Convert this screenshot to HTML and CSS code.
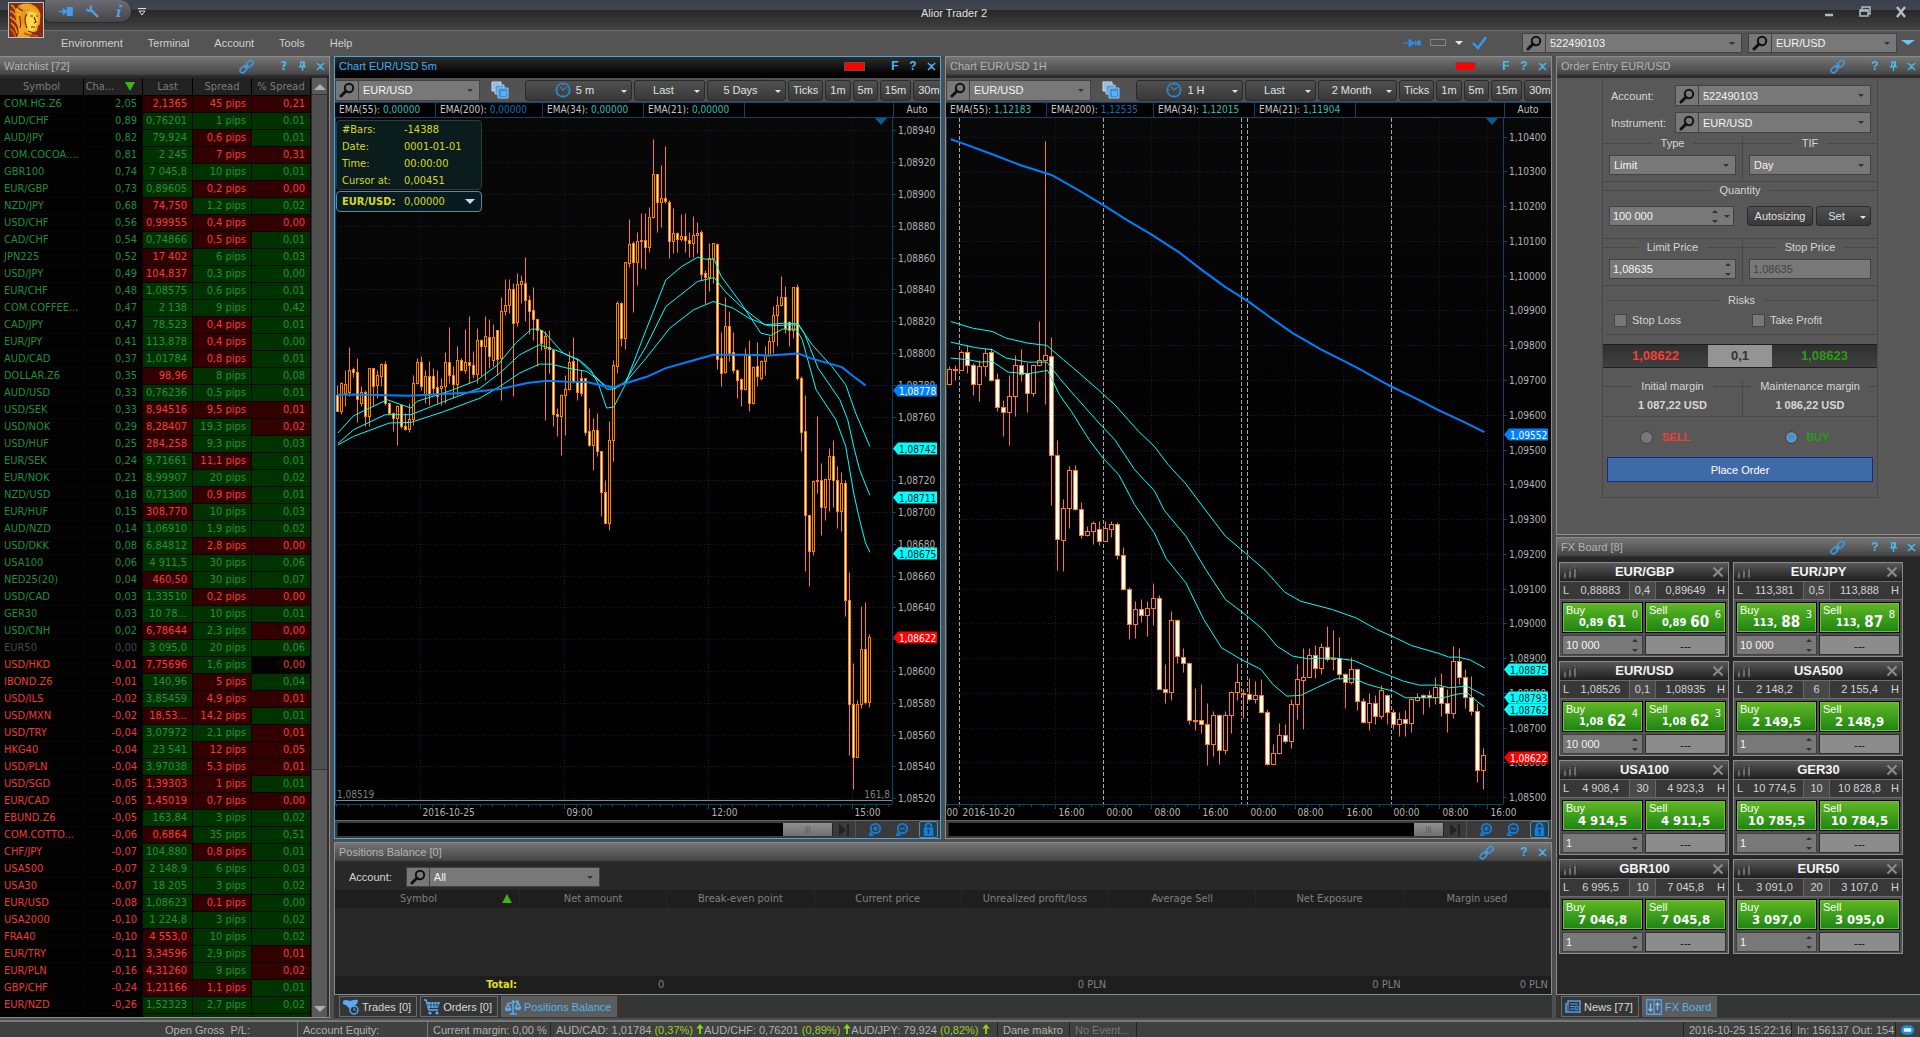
FILE: index.html
```html
<!DOCTYPE html>
<html lang="en">
<head>
<meta charset="utf-8">
<title>Alior Trader 2</title>
<link rel="stylesheet" href="styles.css">
</head>
<body>
<svg class="defs" aria-hidden="true">
  <symbol id="i-search" viewBox="0 0 16 16"><circle cx="10" cy="6" r="4.2" fill="none" stroke="#111" stroke-width="2"/><path d="M7 9 2 14" stroke="#111" stroke-width="3" stroke-linecap="round"/></symbol>
  <symbol id="i-link" viewBox="0 0 16 16"><g fill="none" stroke="#3f9be0" stroke-width="1.6"><rect x="7.5" y="2.5" width="8" height="5" rx="2.4" transform="rotate(-45 11.5 5)"/><rect x="0.8" y="8.6" width="8" height="5" rx="2.4" transform="rotate(-45 4.8 11.1)"/><path d="m6 10 4-4"/></g></symbol>
  <symbol id="i-pin" viewBox="0 0 10 12"><path d="M3 1h4v5H3zM6 1v5M1 6.5h8M5 7v4" fill="none" stroke="#4db8f0" stroke-width="1.4"/></symbol>
  <symbol id="i-close" viewBox="0 0 10 10"><path d="m1 1 2.500 2.500h3L9 1M1 9l2.500-2.500h3L9 9M3.500 3.500l3 3m0-3-3 3" fill="none" stroke="#4db8f0" stroke-width="1.500"/></symbol>
  <symbol id="i-copies" viewBox="0 0 18 18"><path d="M1 1h9v9H1z" fill="#9ab8d0" stroke="#cde"/><path d="M4 4h9v9H4z" fill="#5b9fd8" stroke="#a8d4f4"/><path d="M7 7h10v10H7z" fill="#3f8fdc" stroke="#8fc8f8"/><path d="M10 10h5v5h-5z" fill="#62aef0"/></symbol>
  <symbol id="i-clock" viewBox="0 0 16 16"><circle cx="8" cy="8" r="6.800" fill="none" stroke="#2f86cc" stroke-width="1.600"/><path d="M5 5l3 3 4-3M8 1v2.500M8 12.500V15M1 8h2.500M12.500 8H15" stroke="#2f86cc" stroke-width="1.200" fill="none"/></symbol>
  <symbol id="i-zoomin" viewBox="0 0 16 16"><circle cx="9" cy="7" r="5" fill="none" stroke="#0f7fe0" stroke-width="2"/><path d="M5.500 10.500 3 13M2 14h5M6.500 7h5M9 4.500v5" stroke="#0f7fe0" stroke-width="2"/></symbol>
  <symbol id="i-zoomout" viewBox="0 0 16 16"><circle cx="9" cy="7" r="5" fill="none" stroke="#0f7fe0" stroke-width="2"/><path d="M5.500 10.500 3 13M2 14h5M6.500 7h5" stroke="#0f7fe0" stroke-width="2"/></symbol>
  <symbol id="i-lock" viewBox="0 0 16 16"><path d="M5 7V4.500a3 3 0 0 1 6 0V7" fill="none" stroke="#0f7fe0" stroke-width="2"/><path d="M3 6h10v9H3z" fill="#0f7fe0"/><path d="M8 8v5M6.500 9h3" stroke="#103050" stroke-width="1.200"/></symbol>
  <symbol id="i-end" viewBox="0 0 12 14"><path d="M1 1v12l7-6zM9 1h2v12H9z" fill="#222"/></symbol>
  <symbol id="i-candles" viewBox="0 0 14 15"><g fill="#777" stroke="#333"><path d="M.5 8h3v5h-3zM5.500 5.500h3v7h-3zM10.500 3.500h3v9h-3z"/></g><path d="M2 6v8M7 3v11M12 1v13" stroke="#666" stroke-width=".8"/></symbol>
  <symbol id="i-cross" viewBox="0 0 12 12"><path d="m1.500 1.500 9 9m0-9-9 9" stroke="#8c8c8c" stroke-width="2"/></symbol>
  <symbol id="i-up" viewBox="0 0 8 12"><path d="M4 0 8 5H5v6H3V5H0z" fill="#8ad61c"/></symbol>
</svg>

<header class="titlebar">
  <svg class="logo" viewBox="0 0 36 36" role="img" aria-label="Alior logo">
    <rect width="36" height="36" fill="#8c2a10"/>
    <path d="M10 4c8-5 18-2 21 5 3 5 0 9 1 13l-2 2-1 5-5 2-2 4H9c3-5 1-9 0-14C7 14 6 8 10 4z" fill="#f0a81e"/>
    <path d="M20 10c4-1 8 0 9 3l1 7-2 3-1 5-6 2c-3-4-4-9-3-13z" fill="#ffd84a"/>
    <path d="M3 3c5 2 3 6 7 8M2 9c5 1 5 6 9 7M2 15c4 2 6 4 8 8M3 21c3 2 5 5 6 10M12 3c0 5 4 6 9 5M22 2c2 3 5 3 8 6M14 10c-1 4 1 8 0 12M17 8c-2 5 0 12-1 17" fill="none" stroke="#e8901c" stroke-width="1.600"/>
    <path d="M6 2c4 2 4 6 9 7M12 14c-1 4 2 7 0 12M22 14h3M28 14h2M26 15l2 5-2 1M23 25h4M20 29l6 2M19 12c-3 3-2 9 0 14" fill="none" stroke="#7a2408" stroke-width="1.200"/>
    <path d="M2 27c4 2 5 5 5 8M16 31c4 3 9 2 14 3" stroke="#c8501c" stroke-width="2" fill="none"/>
    <rect x=".5" y=".5" width="35" height="35" fill="none" stroke="#b8c4cc"/>
  </svg>
  <div class="quick">
    <button aria-label="Connect"><svg viewBox="0 0 16 12"><path d="M0 6h8M4 3 8 6 4 9M9 2h5v8H9z" fill="#3f9bee" stroke="#3f9bee" stroke-width="1.500"/></svg></button>
    <button aria-label="Settings"><svg viewBox="0 0 14 14"><path d="M5 5l8 8M1 4c0 2 3 3 4 1s0-4-1-4" fill="none" stroke="#4aa3f0" stroke-width="2.400"/></svg></button>
    <button aria-label="Information"><svg viewBox="0 0 10 14"><path d="M6 0h3L8.500 2.500h-3zM3 4.500h4.500L5.500 11.500H7L6.500 13H2.500L4.500 6H3z" fill="#4aa3f0"/></svg></button>
  </div>
  <button class="quick-more" aria-label="Customize"><svg viewBox="0 0 8 8"><path d="M0 .5h8M1 3h6L4 7z" fill="none" stroke="#ddd"/></svg></button>
  <h1>Alior Trader 2</h1>
  <div class="winbtns">
    <button aria-label="Minimize"><svg viewBox="0 0 14 14"><path d="M3 10h8" stroke="#b4bcc4" stroke-width="2.500"/></svg></button>
    <button aria-label="Restore"><svg viewBox="0 0 14 14"><path d="M4 4V2h8v7h-2M2 5h8v6H2zM2 6h8" fill="none" stroke="#b4bcc4" stroke-width="1.500"/></svg></button>
    <button aria-label="Close window"><svg viewBox="0 0 14 14"><path d="M3 2l8 10M11 2 3 12" stroke="#b4bcc4" stroke-width="2.500"/></svg></button>
  </div>
</header>

<div class="menubar">
  <nav><a href="#env">Environment</a><a href="#terminal">Terminal</a><a href="#account">Account</a><a href="#tools">Tools</a><a href="#help">Help</a></nav>
  <div class="menutools">
    <button aria-label="Link windows"><svg width="18" height="10" viewBox="0 0 18 10"><path d="M0 5h9M6 1l5 4-5 4zM12 3h1v4h-1zM14.500 3H18v4h-3.500z" fill="#2f8be0" stroke="#2f8be0"/></svg></button>
    <button class="swatch" aria-label="Link colour"></button>
    <i class="tri light"></i>
    <button aria-label="Apply"><svg width="16" height="14" viewBox="0 0 16 14"><path d="M1 7l5 5L14 1" fill="none" stroke="#2f9bf0" stroke-width="2.400"/></svg></button>
  </div>
  <div class="combo top-account"><button aria-label="Find account"><svg><use href="#i-search"/></svg></button><div class="drop"><select aria-label="Account"><option>522490103</option></select></div></div>
  <div class="combo top-symbol"><button aria-label="Find instrument"><svg><use href="#i-search"/></svg></button><div class="drop"><select aria-label="Instrument"><option>EUR/USD</option></select></div></div>
  <button class="more" aria-label="More"><i class="tri blue"></i></button>
</div>

<main class="workspace">
  <section class="panel watchlist">
    <header class="ptitle"><h2>Watchlist [72]</h2><button class="link" aria-label="Link"><svg><use href="#i-link"/></svg></button><button aria-label="Help">?</button><button aria-label="Pin"><svg><use href="#i-pin"/></svg></button><button aria-label="Close"><svg><use href="#i-close"/></svg></button></header>
    <div class="wl-body">
      <div class="wl-scroll">
        <table>
          <colgroup><col class="c-sym"><col class="c-chg"><col class="c-last"><col class="c-spr"><col class="c-pct"></colgroup>
          <thead><tr><th>Symbol</th><th class="sorted">Cha...<i class="sort down"></i></th><th>Last</th><th>Spread</th><th>% Spread</th></tr></thead>
          <tbody id="quotes"></tbody>
        </table>
      </div>
      <div class="vbar"><i class="arrow-up"></i><div class="vthumb"></div><i class="arrow-down"></i></div>
    </div>
  </section>

  <div class="center">
    <div class="charts">
      <section class="panel chart active" data-chart="m5">
        <header class="ptitle"><h2>Chart EUR/USD 5m</h2><i class="flag"></i><button aria-label="Float">F</button><button aria-label="Help">?</button><button aria-label="Close"><svg><use href="#i-close"/></svg></button></header>
        <div class="ctools">
          <div class="combo"><button aria-label="Find instrument"><svg><use href="#i-search"/></svg></button><div class="drop"><select aria-label="Chart instrument"><option>EUR/USD</option></select></div></div>
          <button class="copies" aria-label="Templates"><svg><use href="#i-copies"/></svg></button>
          <button class="btn tf"><svg><use href="#i-clock"/></svg>5 m<i class="tri light"></i></button>
          <button class="btn mode">Last<i class="tri light"></i></button>
          <button class="btn range">5 Days<i class="tri light"></i></button>
          <button class="btn">Ticks</button><button class="btn">1m</button><button class="btn">5m</button><button class="btn">15m</button><button class="btn">30m</button>
        </div>
        <div class="emas"><span>EMA(55): <b>0,00000</b></span><span>EMA(200): <b class="blue">0,00000</b></span><span>EMA(34): <b>0,00000</b></span><span>EMA(21): <b>0,00000</b></span><span class="auto">Auto</span></div>
        <div class="plot"><svg class="canvas"></svg>
          <div class="info">
            <dl><dt>#Bars:</dt><dd>-14388</dd><dt>Date:</dt><dd>0001-01-01</dd><dt>Time:</dt><dd>00:00:00</dd><dt>Cursor at:</dt><dd>0,00451</dd></dl>
            <div class="cur"><strong>EUR/USD:</strong><span>0,00000</span><i class="tri pale"></i></div>
          </div>
        </div>
        <div class="cbar"><div class="track"><div class="thumb">|||</div></div><button aria-label="Go to end"><svg class="end"><use href="#i-end"/></svg></button><div class="zooms"><button aria-label="Zoom in"><svg><use href="#i-zoomin"/></svg></button><button aria-label="Zoom out"><svg><use href="#i-zoomout"/></svg></button><button class="on" aria-label="Lock scale"><svg><use href="#i-lock"/></svg></button></div></div>
      </section>

      <section class="panel chart" data-chart="h1">
        <header class="ptitle"><h2>Chart EUR/USD 1H</h2><i class="flag"></i><button aria-label="Float">F</button><button aria-label="Help">?</button><button aria-label="Close"><svg><use href="#i-close"/></svg></button></header>
        <div class="ctools">
          <div class="combo"><button aria-label="Find instrument"><svg><use href="#i-search"/></svg></button><div class="drop"><select aria-label="Chart instrument"><option>EUR/USD</option></select></div></div>
          <button class="copies" aria-label="Templates"><svg><use href="#i-copies"/></svg></button>
          <button class="btn tf"><svg><use href="#i-clock"/></svg>1 H<i class="tri light"></i></button>
          <button class="btn mode">Last<i class="tri light"></i></button>
          <button class="btn range">2 Month<i class="tri light"></i></button>
          <button class="btn">Ticks</button><button class="btn">1m</button><button class="btn">5m</button><button class="btn">15m</button><button class="btn">30m</button>
        </div>
        <div class="emas"><span>EMA(55): <b>1,12183</b></span><span>EMA(200): <b class="blue">1,12535</b></span><span>EMA(34): <b>1,12015</b></span><span>EMA(21): <b>1,11904</b></span><span class="auto">Auto</span></div>
        <div class="plot"><svg class="canvas"></svg></div>
        <div class="cbar"><div class="track"><div class="thumb short">|||</div></div><button aria-label="Go to end"><svg class="end"><use href="#i-end"/></svg></button><div class="zooms"><button aria-label="Zoom in"><svg><use href="#i-zoomin"/></svg></button><button aria-label="Zoom out"><svg><use href="#i-zoomout"/></svg></button><button class="on" aria-label="Lock scale"><svg><use href="#i-lock"/></svg></button></div></div>
      </section>
    </div>

    <section class="panel positions">
      <header class="ptitle"><h2>Positions Balance [0]</h2><button class="link" aria-label="Link"><svg><use href="#i-link"/></svg></button><button aria-label="Help">?</button><button aria-label="Close"><svg><use href="#i-close"/></svg></button></header>
      <div class="pfilter"><label for="pos-acc">Account:</label><div class="combo"><button aria-label="Find account"><svg><use href="#i-search"/></svg></button><div class="drop"><select id="pos-acc"><option>All</option></select></div></div></div>
      <table>
        <colgroup><col class="p-sym"><col><col><col><col><col><col><col></colgroup>
        <thead><tr><th class="sorted">Symbol<i class="sort up"></i></th><th>Net amount</th><th>Break-even point</th><th>Current price</th><th>Unrealized profit/loss</th><th>Average Sell</th><th>Net Exposure</th><th>Margin used</th></tr></thead>
        <tbody><tr><td colspan="8"></td></tr></tbody>
        <tfoot><tr><td class="total">Total:</td><td>0</td><td></td><td></td><td>0 PLN</td><td></td><td>0 PLN</td><td>0 PLN</td></tr></tfoot>
      </table>
    </section>
    <div class="tabs">
      <button><svg viewBox="0 0 16 16"><path d="M0 2c3-2 6 0 7 0s4-2 8-1l-1 4-4 2H5L0 5z" fill="#5aabf4"/><path d="M3 6h7l-2 5z" fill="#5aabf4"/><circle cx="11" cy="11" r="4" fill="#333" stroke="#5aabf4" stroke-width="1.500"/><path d="M11 8.500V11h2" stroke="#5aabf4" fill="none"/></svg>Trades [0]</button>
      <button><svg viewBox="0 0 16 16"><path d="M0 1h2l3 10h9" fill="none" stroke="#5aabf4" stroke-width="1.500"/><path d="M3 3h13l-2 6H5z" fill="#5aabf4"/><path d="M3 6h12M7 3v6M10 3v6M13 3v6" stroke="#333" stroke-width=".7"/><circle cx="6" cy="14" r="1.600" fill="#5aabf4"/><circle cx="13" cy="14" r="1.600" fill="#5aabf4"/></svg>Orders [0]</button>
      <button class="on"><svg viewBox="0 0 16 16"><path d="M8 1v14M5 15h7M2 5l11-3M3 5 .5 10h5zM13 3l-2.500 6h5z" fill="none" stroke="#5aabf4" stroke-width="1.500"/><path d="M0 10h6l-1 2H1zM10 9h6l-1 2h-4z" fill="#5aabf4"/></svg>Positions Balance</button>
    </div>
  </div>

  <div class="right">
    <section class="panel order">
      <header class="ptitle"><h2>Order Entry EUR/USD</h2><button class="link" aria-label="Link"><svg><use href="#i-link"/></svg></button><button aria-label="Help">?</button><button aria-label="Pin"><svg><use href="#i-pin"/></svg></button><button aria-label="Close"><svg><use href="#i-close"/></svg></button></header>
      <form>
        <div class="line"><label for="o-acc">Account:</label><div class="combo"><button type="button" aria-label="Find account"><svg><use href="#i-search"/></svg></button><div class="drop"><select id="o-acc"><option>522490103</option></select></div></div></div>
        <div class="line"><label for="o-ins">Instrument:</label><div class="combo"><button type="button" aria-label="Find instrument"><svg><use href="#i-search"/></svg></button><div class="drop"><select id="o-ins"><option>EUR/USD</option></select></div></div></div>
        <div class="pair">
          <div><label class="cap" for="o-type">Type</label><div class="drop"><select id="o-type"><option>Limit</option></select></div></div>
          <div><label class="cap" for="o-tif">TIF</label><div class="drop"><select id="o-tif"><option>Day</option></select></div></div>
        </div>
        <div class="qty">
          <label class="cap" for="o-qty">Quantity</label>
          <div class="qrow"><div class="spin withdrop"><input id="o-qty" value="100 000"><i class="ud"></i><i class="tri dark"></i></div><button type="button" class="btn">Autosizing</button><button type="button" class="btn set">Set<i class="tri light"></i></button></div>
        </div>
        <div class="pair">
          <div><label class="cap" for="o-lim">Limit Price</label><div class="spin"><input id="o-lim" value="1,08635"><i class="ud"></i></div></div>
          <div><label class="cap" for="o-stop">Stop Price</label><div class="spin"><input id="o-stop" value="1,08635" disabled></div></div>
        </div>
        <fieldset class="risks"><legend class="cap">Risks</legend><div><label><input type="checkbox">Stop Loss</label><label><input type="checkbox">Take Profit</label></div></fieldset>
        <div class="strip"><b class="sell">1,08622</b><b class="mid">0,1</b><b class="buy">1,08623</b></div>
        <div class="pair margins"><div><span class="cap">Initial margin</span><strong>1 087,22 USD</strong></div><div><span class="cap">Maintenance margin</span><strong>1 086,22 USD</strong></div></div>
        <div class="side"><label class="sell"><input type="radio" name="side">SELL</label><label class="buy"><input type="radio" name="side" checked>BUY</label></div>
        <button type="button" class="place">Place Order</button>
      </form>
    </section>
    <section class="panel fx">
      <header class="ptitle"><h2>FX Board [8]</h2><button class="link" aria-label="Link"><svg><use href="#i-link"/></svg></button><button aria-label="Help">?</button><button aria-label="Pin"><svg><use href="#i-pin"/></svg></button><button aria-label="Close"><svg><use href="#i-close"/></svg></button></header>
      <div class="tiles" id="tiles"></div>
    </section>
    <div class="tabs">
      <button><svg viewBox="0 0 16 14"><path d="M3 1h12v11H1V4h2z" fill="none" stroke="#4f9ff0" stroke-width="1.500"/><path d="M5 4h8M5 6.500h4M5 9h4M10 6.500h3v3h-3zM3 4v7" stroke="#4f9ff0" fill="none"/></svg>News [77]</button>
      <button class="on"><svg viewBox="0 0 16 16"><path d="M.7.700h14.600v14.600H.7zM8 1v14" fill="none" stroke="#4f9ff0" stroke-width="1.400"/><path d="M4.500 4v8M2.500 10l2 2 2-2M11.500 11V4M9.500 6l2-2 2 2" fill="none" stroke="#7cc0ff" stroke-width="1.400"/></svg>FX Board</button>
    </div>
  </div>
</main>

<footer class="status">
  <span class="s-pl">Open Gross&nbsp; P/L:</span><span class="s-eq">Account Equity:</span><span class="s-mg">Current margin: 0,00 %</span>
  <span class="s-tk"><span>AUD/CAD: 1,01784 <b>(0,37%)</b><svg><use href="#i-up"/></svg></span><span>AUD/CHF: 0,76201 <b>(0,89%)</b><svg><use href="#i-up"/></svg></span><span>AUD/JPY: 79,924 <b>(0,82%)</b><svg><use href="#i-up"/></svg></span></span>
  <span class="s-mk">Dane makro</span><span class="s-ev">No Event...</span><span class="s-fill"></span>
  <span class="s-dt">2016-10-25 15:22:16</span><span class="s-io">In: 156137 Out: 154</span>
  <span class="s-ic"><svg viewBox="0 0 14 10"><rect x="0" y="0" width="14" height="10" rx="5" fill="#1c8fe0"/><rect x="3" y="3" width="8" height="4" rx="1" fill="#e8f6ff"/></svg></span>
</footer>
<script src="app.js"></script>
</body>
</html>
```
FILE: styles.css
```css
:root {
  --ui: "Liberation Sans", Arial, sans-serif;
  --data: "DejaVu Sans Condensed", "Noto Sans", sans-serif;
  --ctl: #787878;
  --edge: #424242;
}
* { box-sizing: border-box; }
html, body { margin: 0; height: 100%; }
body { display: flex; flex-direction: column; height: 100vh; overflow: hidden; background: #4e4e4e; color: #d4d4d4; font: 11px/14px var(--ui); }
.defs { position: absolute; width: 0; height: 0; }
h1, h2 { margin: 0; font-weight: normal; }
button, select, input { font: inherit; color: inherit; margin: 0; padding: 0; border: 0; background: none; }
button { display: inline-flex; align-items: center; justify-content: center; white-space: nowrap; }
a { color: inherit; text-decoration: none; }
table { border-collapse: separate; border-spacing: 0; table-layout: fixed; width: 100%; }
th { font-weight: normal; }

.tri { display: inline-block; width: 0; height: 0; border: 4px solid transparent; border-bottom: 0; border-top-color: #e4e4e4; }
.tri.dark { border-top-color: #333; }
.tri.blue { border-width: 5px 7px 0; border-top-color: #6cc4f8; }
.tri.pale { border-width: 5px 5px 0; border-top-color: #b8e0f8; }

/* title bar and menu */
.titlebar { position: relative; z-index: 1; display: flex; align-items: flex-start; height: 31px; padding: 0 12px 0 8px; background: linear-gradient(#3c404c 0, #40444f 10px, #272727 10px, #434343 30px); border-bottom: 1px solid #6c6c6c; }
.logo { width: 36px; height: 36px; margin-top: 2px; flex: none; }
.quick { display: flex; align-items: center; justify-content: space-around; width: 88px; height: 23px; padding-left: 8px; background: linear-gradient(#6a6a72, #464646); border: 1px solid #2c2c2c; border-top: 0; border-radius: 0 12px 12px 6px; }
.quick svg { width: 15px; height: 13px; }
.quick-more { margin: 8px 0 0 6px; }
.quick-more svg { width: 8px; height: 8px; }
.titlebar h1 { flex: 1; padding-right: 60px; margin: 6px 0 0; text-align: center; font-size: 11px; line-height: 14px; color: #e0e0e0; }
.winbtns { display: flex; gap: 22px; margin-top: 5px; }
.winbtns svg { width: 14px; height: 14px; }
.menubar { display: flex; align-items: center; height: 25px; padding: 0 1px 2px 0; background: #545454; flex: none; color: #cfcfcf; }
nav { display: flex; gap: 25px; margin-left: 61px; flex: 1; }
.menutools { display: flex; align-items: center; gap: 9px; margin-right: 34px; }
.swatch { width: 16px; height: 7px; border: 1px solid #858585; }
.more { width: 22px; }
.top-account { width: 220px; margin-right: 6px; }
.top-symbol { width: 149px; }

/* combo boxes and buttons */
.combo { display: flex; height: 20px; background: var(--ctl); border: 1px solid var(--edge); color: #f4f4f4; }
.combo > button { width: 23px; border-right: 1px solid var(--edge); flex: none; }
.combo svg { width: 16px; height: 16px; }
.combo .drop { flex: 1; border: 0; height: auto; }
.drop { position: relative; display: flex; height: 20px; background: var(--ctl); border: 1px solid var(--edge); color: #f4f4f4; }
.drop select { appearance: none; width: 100%; padding: 0 4px; }
.drop::after { content: ""; position: absolute; right: 6px; top: 8px; border: 3px solid transparent; border-bottom: 0; border-top-color: #333; pointer-events: none; }
.btn { height: 21px; padding: 0 4px; background: linear-gradient(#505050, #383838); border: 1px solid #2a2a2a; border-radius: 3px; color: #e0e0e0; }

/* docked panels */
.workspace { flex: 1; min-height: 0; display: flex; gap: 4px; padding-bottom: 2px; }
.panel { display: flex; flex-direction: column; border: 1px solid #8c8c8c; min-width: 0; }
.ptitle { display: flex; align-items: center; height: 21px; padding: 0 0 3px 4px; flex: none; background: linear-gradient(#757575, #474747 17px, #2a2a2a 19px); color: #b4b4b4; }
.ptitle h2 { flex: 1; font-size: 11px; line-height: 14px; white-space: nowrap; }
.ptitle button { width: 18px; color: #4db8f0; font-weight: bold; font-size: 12px; }
.ptitle svg { width: 9px; height: 11px; }
.ptitle .link { margin-right: 20px; }
.ptitle .link svg { width: 15px; height: 15px; }
.flag { width: 21px; height: 9px; background: #f00; border: 1px solid #555; margin-right: 21px; }

/* watchlist */
.watchlist { width: 330px; flex: none; border-left: 0; font-family: var(--data); background: #000; }
.watchlist .ptitle h2 { font-family: var(--ui); }
.wl-body { flex: 1; min-height: 0; display: flex; }
.wl-scroll { width: 311px; overflow: hidden; }
.c-sym { width: 84px; } .c-chg { width: 59px; } .c-last { width: 50px; } .c-spr { width: 59px; } .c-pct { width: 59px; }
.watchlist th, .watchlist td { height: 17px; padding: 0 5px 0 0; border: solid #000; border-width: 0 1px 1px 0; line-height: 14px; font-size: 11px; white-space: nowrap; overflow: hidden; text-align: right; }
.watchlist td { border-color: #060606; background: #020202; }
.watchlist th { height: 18px; padding: 0; text-align: center; background: #222; color: #7c7c7c; }
.watchlist th.sorted { padding-right: 26px; position: relative; }
.watchlist td:first-child { text-align: left; padding-left: 4px; }
.pos { color: #1f8f3f; } .neg { color: #ee3a34; } .zero { color: #484848; }
.watchlist td.g { background: #003200; color: #2a8f3c; }
.watchlist td.r { background: #320000; color: #f04038; }
.sort { position: absolute; right: 7px; top: 4px; border: 5px solid transparent; }
.sort.down { border-top: 9px solid #3cb414; border-bottom: 0; }
.sort.up { border-bottom: 9px solid #3cb414; border-top: 0; }
.vbar { flex: 1; display: flex; flex-direction: column; align-items: center; background: #5a5a5a; border-left: 1px solid #2a2a2a; border-right: 2px solid #2e2e2e; }
.arrow-up, .arrow-down { border: 6px solid transparent; margin: 6px 0 4px; flex: none; }
.arrow-up { border-bottom-color: #b0b0b0; border-top: 0; }
.arrow-down { border-top-color: #b0b0b0; border-bottom: 0; margin: auto 0 5px; }
.vthumb { width: 100%; height: 72%; background: #505050; border: solid #333; border-width: 1px 0; }

/* charts */
.center { flex: 1; min-width: 0; display: flex; flex-direction: column; }
.charts { flex: 1; min-height: 0; display: flex; gap: 4px; margin-bottom: 3px; }
.chart { flex: 1 1 0; background: #000; }
.chart.active { border-color: #3fa9e8; }
.chart.active .ptitle { background: linear-gradient(#2c2c2c, #000 18px); color: #3fb0f0; }
.ctools { display: flex; align-items: center; gap: 2px; height: 24px; flex: none; overflow: hidden; background: #525252; }
.ctools .combo { width: 145px; height: 21px; flex: none; }
.ctools .btn { flex: none; }
.copies { width: 41px; padding-left: 9px; justify-content: flex-start; flex: none; }
.copies svg { width: 18px; height: 18px; }
.ctools .tf { width: 107px; position: relative; gap: 5px; padding-right: 12px; }
.tf svg { width: 16px; height: 16px; }
.ctools .mode, .ctools .range { width: 71px; padding-right: 16px; position: relative; }
.ctools .range { width: 79px; }
.btn .tri { position: absolute; right: 4px; top: 9px; border-width: 3px 3px 0; }
.emas { display: flex; height: 16px; flex: none; border: solid #0a4468; border-width: 1px 0; font: 10px/14px var(--data); color: #c8c8c8; }
.emas span { width: 101px; padding-left: 4px; border-right: 1px solid #0a4468; white-space: nowrap; }
.emas span:nth-child(2) { width: 107px; }
.emas b { font-weight: normal; color: #2cc0b4; }
.emas b.blue { color: #0f70b8; }
.emas .auto { width: 47px; margin-left: auto; padding: 0; text-align: center; border-right: 0; border-left: 1px solid #0a4468; }
.plot { position: relative; flex: 1; min-height: 0; background: linear-gradient(#080808, #000 60%); }
.canvas { position: absolute; inset: 0; width: 100%; height: 100%; display: block; font: 10px var(--data); }
.info { position: absolute; left: 1px; top: 2px; width: 146px; font: 11px/17px var(--data); color: #d8d820; }
.info dl { display: grid; grid-template-columns: 62px 1fr; margin: 0 0 1px; padding: 0 0 0 5px; background: #0a1c1c; border: 1px solid #2c3c40; border-radius: 4px; }
.info dd { margin: 0; }
.cur { display: flex; align-items: center; height: 21px; padding: 0 6px 0 5px; background: #081c20; border: 1px solid #6484a8; border-radius: 4px; white-space: nowrap; }
.cur strong { width: 62px; }
.cur .tri { margin-left: auto; }
.cbar { display: flex; align-items: center; height: 18px; flex: none; padding: 0 2px; border-top: 1px solid #666; background: #3a3a3a; }
.track { flex: 1; height: 13px; display: flex; justify-content: flex-end; background: #000; border: solid #222; border-width: 0 1px; }
.thumb { width: 49px; text-align: center; font-size: 8px; line-height: 12px; color: #555; background: linear-gradient(#909090, #707070); }
.thumb.short { width: 29px; }
.cbar .end { width: 12px; height: 14px; margin: 0 5px; }
.zooms { display: flex; gap: 8px; border-left: 1px solid #555; padding-left: 9px; }
.zooms button { width: 19px; height: 17px; }
.zooms svg { width: 15px; height: 15px; }
.zooms .on { border: 1px solid #5c88a0; border-radius: 2px; background: #204050; }

/* positions */
.positions { height: 153px; flex: none; background: #282828; }
.pfilter { display: flex; align-items: center; gap: 14px; height: 26px; padding-left: 14px; }
.pfilter .combo { width: 194px; }
.p-sym { width: 185px; }
.positions table { flex: 1; font: 11px/16px var(--data); color: #808080; }
.positions th { height: 18px; padding: 0; background: #1e1e1e; border-right: 1px solid #262626; }
.positions th.sorted { position: relative; padding-right: 17px; }
.positions tfoot td { height: 18px; padding: 0 3px 0 0; text-align: right; background: #1e1e1e; }
.positions td.total { color: #e0e020; font-weight: bold; }
.positions .sort { top: 4px; right: 7px; }
.tabs { display: flex; gap: 3px; align-items: flex-start; height: 23px; padding: 1px 0 0 5px; flex: none; background: #343636; }
.tabs button { height: 21px; gap: 3px; padding: 0 5px 0 3px; border: 1px solid #6a6a6a; color: #d8d8d8; }
.tabs svg { width: 16px; height: 16px; }
.tabs .on { background: #5c5c5c; color: #4db8f0; border-color: #606060; }

/* order entry */
.right { width: 364px; flex: none; display: flex; flex-direction: column; }
.order { height: 479px; flex: none; margin-bottom: 2px; background: #585858; border-right: 0; }
form { width: 276px; height: 420px; margin-left: 45px; border: 1px solid #484848; border-top: 0; display: flex; flex-direction: column; color: #d6d6d6; }
.line { display: flex; align-items: center; justify-content: space-between; height: 27px; padding: 0 6px 0 8px; margin-top: 4px; }
.line + .line { margin-top: 0; }
.line .combo { width: 196px; height: 21px; }
.pair { display: grid; grid-template-columns: 139px 1fr; height: 46px; border-bottom: 1px solid #484848; }
.pair > div { padding: 0 6px; display: flex; flex-direction: column; gap: 4px; border-left: 1px solid #484848; }
.pair > div:first-child { border-left: 0; }
.cap { display: flex; align-items: center; gap: 9px; height: 15px; line-height: 15px; margin: 0 -6px; white-space: nowrap; }
.cap::before, .cap::after { content: ""; flex: 1; height: 1px; background: #484848; }
.qty { height: 57px; padding: 1px 6px 0; border-bottom: 1px solid #484848; margin-bottom: 1px; }
.qrow { display: flex; gap: 3px; margin-top: 8px; }
.qrow .spin { width: 125px; margin-right: 10px; }
.qrow .btn { flex: 1; height: 20px; padding: 0; }
.qrow .set { flex: none; width: 55px; padding-right: 14px; position: relative; }
.spin { display: flex; align-items: center; height: 20px; background: var(--ctl); border: 1px solid var(--edge); color: #f4f4f4; }
.spin input { flex: 1; min-width: 0; width: 0; padding: 0 3px; height: 100%; }
.spin input:disabled { color: #444; }
.ud { width: 6px; height: 13px; margin-right: 4px; display: flex; flex-direction: column; justify-content: space-between; flex: none; }
.ud::before, .ud::after { content: ""; border: 3px solid transparent; }
.ud::before { border-bottom-color: #333; border-top: 0; }
.ud::after { border-top-color: #333; border-bottom: 0; }
.withdrop .tri { border-width: 3px 3px 0; margin: 0 3px; }
.withdrop .ud { margin-right: 3px; }
.withdrop .ud + .tri { box-sizing: content-box; }
.risks { margin: 7px 0 9px 3px; padding: 0; border: 0; border-bottom: 1px solid #484848; height: 42px; }
.risks legend { width: 100%; padding: 0; margin: 0; }
.risks > div { display: grid; grid-template-columns: 138px 1fr; padding: 5px 0 0 8px; }
.risks label, .side label { display: flex; align-items: center; gap: 5px; }
input[type=checkbox] { appearance: none; width: 13px; height: 13px; background: var(--ctl); border: 1px solid #444; }
input[type=radio] { appearance: none; width: 13px; height: 13px; border-radius: 50%; background: var(--ctl); border: 1px solid #444; }
input[type=radio]:checked { background: radial-gradient(circle, #2a98e8 0 3px, #8a9aa4 4px, #787878 5px); }
.strip { display: flex; height: 24px; line-height: 22px; text-align: center; font-size: 13px; border: solid #1e1e1e; border-width: 1px 0; background: linear-gradient(#303030, #404040); flex: none; }
.strip b { flex: 1; }
.strip .mid { flex: none; width: 64px; background: #949494; color: #333; }
.sell { color: #f04038; }
.buy { color: #2c9a18; }
.margins { margin-top: 11px; height: 38px; }
.margins strong { text-align: center; }
.side { display: flex; height: 40px; align-items: center; font-weight: bold; }
.side label { gap: 9px; margin-left: 37px; }
.side .buy { gap: 8px; margin-left: 95px; }
.place { height: 25px; margin: 0 4px; background: #3f6aa8; border: 1px solid #0a2f88; color: #fff; }

/* fx board */
.fx { flex: 1; min-height: 0; background: #272727; border-right: 0; }
.tiles { display: grid; grid-template-columns: 170px 170px; gap: 4px; padding: 3px 2px; }
.tile { height: 95px; border: 1px solid #8c8c8c; background: #505050; }
.tile header { display: flex; align-items: center; height: 19px; padding: 0 4px 0 3px; background: linear-gradient(#585858, #1e1e1e); border-bottom: 1px solid #6c6c6c; }
.tile h3 { flex: 1; margin: 0; text-align: center; font-size: 13px; line-height: 16px; color: #f4f4f4; }
.tile header svg { width: 14px; height: 15px; }
.tile header button svg { width: 12px; height: 12px; }
.lh { display: grid; grid-template-columns: 12px 57px 27px 59px 12px; height: 18px; line-height: 17px; text-align: center; background: #383838; border-bottom: 1px solid #6c6c6c; }
.lh span:nth-child(3) { background: #484848; border: solid #666; border-width: 0 1px; }
.cells { display: grid; grid-template-columns: 81px 81px; grid-template-rows: 31px 20px; gap: 2px; padding: 2px; }
.deal { position: relative; align-items: flex-end; gap: 4px; padding-bottom: 1px; background: linear-gradient(#62b824, #1c8414); border: 1px solid #000; box-shadow: inset 0 0 0 1px #70c030; color: #fff; font: bold 13px/16px var(--data); }
.deal small { position: absolute; left: 3px; top: 1px; font: 11px/13px var(--ui); }
.deal .sm { font-size: 11px; }
.deal .lg { font-size: 15px; line-height: 18px; }
.deal sup { position: absolute; right: 4px; top: 5px; font: 11px/14px var(--data); }
.deal.frac { padding-right: 0; }
.cells .none { background: #8c8c8c; border: 1px solid #2c2c2c; color: #111; text-align: center; line-height: 20px; }

/* status bar */
.status { display: flex; height: 17px; flex: none; overflow: hidden; padding-left: 2px; background: #404040; border-top: 2px solid #787878; color: #b0b0b0; line-height: 16px; white-space: nowrap; }
.status > span { padding-left: 5px; border-right: 1px solid #222; }
.status b { font-weight: normal; color: #98d028; margin: 0 3px 0 0; }
.status svg { width: 8px; height: 11px; vertical-align: -1px; }
.status .s-pl { width: 296px; padding-left: 163px; border-color: #777; }
.status .s-eq { width: 130px; border-color: #777; }
.s-mg { width: 123px; }
.s-tk { display: flex; justify-content: space-between; width: 447px; padding-right: 8px; }
.s-mk { width: 72px; }
.s-ev { width: 67px; color: #787878; }
.s-fill { flex: 1; }
.s-dt { width: 108px; }
.s-io { width: 104px; }
.status .s-ic { width: 24px; border: 0; }
.s-ic svg { width: 13px; height: 10px; }
```
FILE: app.js
```js
// Watchlist rows: symbol | change | last | spread | % spread; a leading r, g or k sets the cell colour.
const quotes = `COM.HG.Z6|2,05|r2,1365|r45|r0,21
AUD/CHF|0,89|g0,76201|g1|g0,01
AUD/JPY|0,82|g79,924|r0,6|g0,01
COM.COCOA....|0,81|g2 245|r7|r0,31
GBR100|0,74|g7 045,8|g10|g0,01
EUR/GBP|0,73|g0,89605|r0,2|r0,00
NZD/JPY|0,68|r74,750|g1,2|g0,02
USD/CHF|0,56|r0,99955|r0,4|r0,00
CAD/CHF|0,54|g0,74866|r0,5|g0,01
JPN225|0,52|r17 402|g6|g0,03
USD/JPY|0,49|r104,837|g0,3|g0,00
EUR/CHF|0,48|g1,08575|g0,6|g0,01
COM.COFFEE...|0,47|g2 138|g9|g0,42
CAD/JPY|0,47|g78,523|r0,4|g0,01
EUR/JPY|0,41|g113,878|r0,4|g0,00
AUD/CAD|0,37|g1,01784|r0,8|g0,01
DOLLAR.Z6|0,35|r98,96|g8|g0,08
AUD/USD|0,33|g0,76236|g0,5|g0,01
USD/SEK|0,33|r8,94516|r9,5|r0,01
USD/NOK|0,29|r8,28407|g19,3|r0,02
USD/HUF|0,25|r284,258|g9,3|g0,03
EUR/SEK|0,24|g9,71661|r11,1|g0,01
EUR/NOK|0,21|g8,99907|g20|g0,02
NZD/USD|0,18|g0,71300|r0,9|g0,01
EUR/HUF|0,15|r308,770|g10|g0,03
AUD/NZD|0,14|g1,06910|g1,9|g0,02
USD/DKK|0,08|g6,84812|r2,8|r0,00
USA100|0,06|g4 911,5|g30|g0,06
NED25(20)|0,04|r460,50|g30|g0,07
USD/CAD|0,03|g1,33510|r0,2|r0,00
GER30|0,03|g10 78...|g10|g0,01
USD/CNH|0,02|r6,78644|g2,3|r0,00
EUR50|0,00|g3 095,0|g20|g0,06
USD/HKD|-0,01|r7,75696|g1,6|k0,00
IBOND.Z6|-0,01|g140,96|r5|g0,04
USD/ILS|-0,02|g3,85459|r4,9|r0,01
USD/MXN|-0,02|r18,53...|r14,2|g0,01
USD/TRY|-0,04|g3,07972|g2,1|r0,01
HKG40|-0,04|g23 541|r12|r0,05
USD/PLN|-0,04|g3,97038|r5,3|r0,01
USD/SGD|-0,05|r1,39303|r1|g0,01
EUR/CAD|-0,05|r1,45019|r0,7|r0,00
EBUND.Z6|-0,05|g163,84|g3|g0,02
COM.COTTO...|-0,06|r0,6864|g35|g0,51
CHF/JPY|-0,07|g104,880|r0,8|g0,01
USA500|-0,07|g2 148,9|g6|g0,03
USA30|-0,07|g18 205|g3|g0,02
EUR/USD|-0,08|g1,08623|r0,1|g0,00
USA2000|-0,10|g1 224,8|g3|g0,02
FRA40|-0,10|r4 553,0|g10|g0,02
EUR/TRY|-0,11|r3,34596|g2,9|r0,01
EUR/PLN|-0,16|r4,31260|g9|r0,02
GBP/CHF|-0,24|r1,21166|r1,1|g0,01
EUR/NZD|-0,26|g1,52323|g2,7|g0,02
AUS200|-0,30|g5 437|g5|g0,09`;
document.getElementById('quotes').innerHTML = quotes.split('\n').map(line => {
  const [sym, chg, last, spr, pct] = line.split('|');
  const dir = chg === '0,00' ? 'zero' : chg[0] === '-' ? 'neg' : 'pos';
  const cell = (v, unit = '') => `<td class="${v[0] === 'k' ? 'neg' : v[0]}">${v.slice(1)}${unit}</td>`;
  return `<tr><td class="${dir}">${sym}</td><td class="${dir}">${chg}</td>${cell(last)}${cell(spr, ' pips')}${cell(pct)}</tr>`;
}).join('');

// FX tiles: name, low, spread, high, buy, sell, amount; split prices are "small large pip".
const tiles = [
  ['EUR/GBP', '0,88883', '0,4', '0,89649', ['0,89', '61', '0'], ['0,89', '60', '6'], '10 000'],
  ['EUR/JPY', '113,381', '0,5', '113,888', ['113,', '88', '3'], ['113,', '87', '8'], '10 000'],
  ['EUR/USD', '1,08526', '0,1', '1,08935', ['1,08', '62', '4'], ['1,08', '62', '3'], '10 000'],
  ['USA500', '2 148,2', '6', '2 155,4', ['2 149,5'], ['2 148,9'], '1'],
  ['USA100', '4 908,4', '30', '4 923,3', ['4 914,5'], ['4 911,5'], '1'],
  ['GER30', '10 774,5', '10', '10 828,8', ['10 785,5'], ['10 784,5'], '1'],
  ['GBR100', '6 995,5', '10', '7 045,8', ['7 046,8'], ['7 045,8'], '1'],
  ['EUR50', '3 091,0', '20', '3 107,0', ['3 097,0'], ['3 095,0'], '1']
];
const deal = (label, p) => `<button class="deal${p[2] ? ' frac' : ''}"><small>${label}</small>` +
  (p[2] ? `<span class="sm">${p[0]}</span><span class="lg">${p[1]}</span><sup>${p[2]}</sup>` : `<span>${p[0]}</span>`) + '</button>';
document.getElementById('tiles').innerHTML = tiles.map(([n, lo, sp, hi, b, s, q]) => `
  <article class="tile"><header><svg><use href="#i-candles"/></svg><h3>${n}</h3><button aria-label="Remove ${n}"><svg><use href="#i-cross"/></svg></button></header>
  <div class="lh"><span>L</span><span>${lo}</span><span>${sp}</span><span>${hi}</span><span>H</span></div>
  <div class="cells">${deal('Buy', b)}${deal('Sell', s)}<div class="spin"><input aria-label="${n} amount" value="${q}"><i class="ud"></i></div><div class="none">---</div></div></article>`).join('');

// Candle: high, body top, body bottom, low, direction (1 = falling), in chart units down from the top.
const m5 = [
1005,1035,1085,1085,1, 998,1000,1085,1092,0, 960,1002,1030,1068,0, 893,960,1028,1040,0, 953,957,968,982,1, 925,967,1047,1118,1, 1010,1027,1060,1070,0,
1022,1027,1100,1130,1, 955,955,1100,1128,0, 955,955,1008,1070,1, 960,977,1007,1045,0, 940,943,980,1010,0, 935,943,1060,1065,1, 1058,1060,1090,1092,1,
1086,1090,1105,1145,1, 1066,1068,1105,1187,0, 1064,1066,1130,1134,1, 1090,1128,1138,1140,1, 1060,1108,1138,1148,0, 975,1000,1108,1125,0, 925,937,1000,1004,0,
918,937,1010,1020,1, 960,980,1035,1060,0, 935,978,1035,1065,1, 955,978,1015,1035,1, 960,1013,1040,1060,1, 985,1008,1015,1065,0, 907,937,1010,1060,0,
832,937,977,1000,1, 950,975,1003,1045,1, 890,932,1003,1035,0, 925,930,960,962,1, 838,937,962,970,0, 798,937,945,1000,1, 905,945,972,985,1,
835,870,972,1000,0, 868,872,890,978,1, 798,860,890,990,0, 808,862,920,955,1, 822,862,930,950,0, 840,842,927,975,1, 742,785,925,1052,0,
687,765,785,795,0, 687,717,767,790,0, 700,717,820,1038,1, 670,703,818,830,0, 675,693,703,760,0, 622,700,752,815,1, 735,752,783,853,1,
712,782,808,870,1, 808,808,840,950,1, 842,842,880,900,1, 845,860,895,1110,0, 840,893,898,970,1, 898,900,1093,1128,1, 1075,1092,1100,1158,1,
1033,1035,1100,1215,0, 975,1018,1037,1157,0, 905,937,1018,1020,0, 862,935,993,1000,1, 925,993,1028,1050,1, 960,985,1030,1040,1, 985,985,1148,1155,1,
1075,1143,1187,1190,1, 1105,1140,1187,1262,0, 1090,1142,1205,1220,1, 1205,1205,1328,1400,1, 1290,1328,1420,1420,1, 1115,1170,1420,1440,0, 930,945,1170,1235,0,
755,760,948,970,0, 757,760,865,890,1, 635,637,865,897,0, 507,582,640,650,0, 573,580,637,787,1, 545,573,637,705,0, 490,570,574,655,1,
490,570,590,657,1, 470,500,590,605,0, 267,373,502,505,0, 372,373,457,545,1, 345,443,457,530,0, 288,445,453,458,1, 450,455,573,625,1,
475,548,573,608,0, 545,548,567,607,1, 492,558,567,573,0, 488,558,570,605,1, 545,570,580,620,1, 497,555,580,620,0, 515,548,555,608,0,
540,545,672,690,1, 660,670,680,763,1, 580,625,680,723,0, 578,580,625,700,0, 578,582,928,958,1, 848,925,970,1010,1, 742,830,968,970,0,
783,830,910,935,1, 848,907,962,970,1, 958,960,990,1045,1, 985,988,1018,1068,1, 895,915,1018,1020,0, 870,915,1060,1085,1, 950,952,1060,1062,0,
878,950,980,1010,1, 930,935,985,990,0, 890,915,935,975,0, 860,875,915,918,0, 770,795,875,910,0, 740,765,795,890,0, 678,742,765,768,0,
708,742,835,850,1, 815,818,840,890,1, 710,712,840,865,0, 703,712,985,990,1, 980,985,1147,1205,1, 1035,1145,1397,1563,1, 1395,1395,1505,1610,1,
1290,1295,1505,1515,0, 1098,1290,1295,1330,1, 1240,1290,1372,1455,1, 1285,1287,1372,1410,0, 1195,1218,1287,1385,0, 1170,1218,1292,1372,1, 1250,1292,1385,1435,1,
1267,1300,1385,1443,0, 1290,1300,1650,1698,1, 1568,1650,1963,2117,1, 1842,1963,2123,2220,1, 1952,1963,2123,2124,0, 1670,1800,1963,1977,0, 1657,1800,1957,1965,1, 1755,1762,1957,1973,0];
const h1 = [
950,957,1002,1005,0, 945,958,962,990,1, 900,907,960,962,0, 887,907,947,970,1, 940,945,1003,1035,1, 930,948,1002,1055,0, 895,910,948,980,0,
895,908,990,995,1, 970,988,1073,1083,1, 1050,1072,1088,1160,1, 975,1040,1088,1185,0, 917,945,1040,1100,0, 897,945,972,995,1, 940,970,1030,1088,1,
942,945,1030,1040,0, 813,932,947,950,0, 272,917,932,1062,0, 862,918,1216,1365,1, 1170,1216,1467,1562,1, 1347,1376,1470,1563,0, 1250,1260,1376,1435,0,
1245,1260,1378,1380,1, 1358,1378,1455,1465,1, 1428,1443,1455,1460,0, 1415,1420,1445,1483,0, 1415,1437,1475,1485,1, 1415,1435,1473,1475,0, 1415,1423,1438,1462,0,
1416,1423,1517,1527,1, 1492,1517,1618,1622,1, 1612,1618,1723,1770,1, 1655,1678,1723,1765,0, 1648,1678,1697,1717,1, 1655,1675,1697,1760,0, 1600,1645,1675,1727,0,
1635,1645,1918,1920,1, 1845,1918,1928,1960,1, 1685,1710,1928,1953,0, 1708,1710,1820,1840,1, 1795,1822,1840,1868,1, 1838,1840,2013,2025,1, 1915,2011,2015,2043,1,
1905,2011,2023,2050,1, 1960,2023,2085,2148,1, 1985,1997,2083,2120,0, 1995,1997,2103,2145,1, 1985,1998,2103,2115,0, 1925,1927,1998,2052,0, 1842,1897,1928,1953,0,
1918,1930,1934,2005,1, 1887,1933,1948,1953,1, 1895,1936,1950,1960,0, 1890,1937,1988,1992,1, 1978,1988,2143,2148,1, 2085,2110,2143,2144,0, 2022,2058,2112,2115,0,
2025,2058,2075,2080,1, 1950,1963,2075,2097,0, 1845,1890,1963,2008,0, 1797,1882,1892,2040,0, 1797,1818,1882,1884,0, 1787,1818,1855,1885,1, 1780,1792,1855,1873,0,
1728,1792,1830,1835,1, 1740,1826,1830,1863,1, 1762,1827,1873,1888,1, 1870,1873,1897,1977,1, 1822,1860,1897,1903,0, 1855,1860,1955,1982,1, 1945,1955,2018,2020,1,
1930,1960,2018,2043,0, 1938,1960,2000,2025,1, 1908,1922,2000,2010,0, 1935,1937,1988,2025,1, 1980,1987,2023,2040,1, 1987,2010,2023,2060,0, 1983,2010,2020,2060,1,
1945,1950,2022,2047,0, 1930,1943,1952,1955,0, 1935,1938,1942,1995,1, 1922,1938,1942,1973,1, 1883,1912,1942,1965,0, 1870,1912,1960,2000,1, 1920,1960,1992,2048,1,
1790,1835,1992,2005,0, 1797,1835,1883,1903,1, 1860,1883,1943,1975,1, 1880,1942,1985,1997,1, 1960,1985,2162,2197,1, 2095,2117,2162,2220,0];

const charts = {
  m5: {
    candles: m5, first: 18, step: 10.12, body: 3,
    prices: { top: 108940, by: 20, n: 22, y: 241, dy: 95.5 },
    grid: [228, 593, 957, 1321], days: [],
    times: [[234, '2016-10-25'], [598, '09:00'], [963, '12:00'], [1327, '15:00']],
    slow: '20,1035 60,1034 200,1038 300,1032 350,1028 430,1018 500,1000 550,993 600,996 650,997 690,1008 720,1012 750,1000 800,982 850,955 900,938 970,915 1050,915 1110,917 1185,911 1215,925 1260,940 1295,952 1325,980 1355,1007',
    fast: ['20,1150 60,1098 145,1050 205,1075 220,1055 300,1025 370,993 425,945 470,880 510,838 530,838 545,850 590,910 630,930 660,960 680,1005 700,1075 718,1072 745,1010 800,840 850,690 890,650 930,622 950,628 972,628 990,680 1040,760 1090,850 1115,857 1145,838 1180,838 1195,870 1230,1020 1280,1110 1305,1190 1325,1330 1340,1410 1355,1480 1366,1508',
      '20,1182 60,1140 140,1095 205,1095 300,1050 380,1015 430,970 480,915 530,885 580,905 630,932 680,990 700,1018 720,1018 745,1000 800,890 850,770 930,695 972,683 1000,725 1040,770 1100,825 1150,820 1185,822 1200,850 1235,955 1290,1050 1310,1110 1325,1190 1340,1260 1366,1337',
      '20,1186 60,1160 150,1120 205,1118 290,1085 380,1045 430,1010 480,970 530,943 560,943 600,955 650,965 700,1010 720,1014 750,995 800,925 860,835 920,780 970,755 1020,775 1060,805 1110,828 1185,825 1220,885 1270,950 1305,1005 1330,1090 1366,1190'],
    tags: [[1021, '1,08778', '#0080ff', '#fff'], [1194, '1,08742', '#0ff', '#022'], [1341, '1,08711', '#0ff', '#022'], [1510, '1,08675', '#0ff', '#022'], [1764, '1,08622', '#f00', '#fff']],
    level: [2251, '1,08519', '161,8']
  },
  h1: {
    candles: h1, first: 21, step: 15.18, body: 5,
    prices: { top: 110400, by: 100, n: 20, y: 260, dy: 104.4 },
    grid: [289, 532, 653, 896, 1018, 1260, 1382], days: [47, 411, 760, 775, 1139],
    times: [[14, '00'], [53, '2016-10-20'], [296, '16:00'], [417, '00:00'], [538, '08:00'], [660, '16:00'], [781, '00:00'], [902, '08:00'], [1025, '16:00'], [1145, '00:00'], [1267, '08:00'], [1389, '16:00']],
    slow: '25,268 50,278 130,313 200,345 280,375 340,415 410,465 470,510 530,552 600,605 660,660 720,712 780,757 830,800 890,850 960,898 1050,952 1130,1005 1200,1045 1260,1082 1320,1115 1375,1147',
    fast: ['25,815 80,835 130,845 165,865 220,880 268,887 310,930 350,970 400,1022 440,1065 500,1145 540,1190 575,1245 620,1303 660,1367 720,1460 770,1510 820,1562 870,1628 910,1655 990,1680 1050,1705 1100,1738 1150,1765 1190,1788 1260,1812 1285,1823 1310,1823 1340,1832 1375,1855',
      '25,877 85,893 130,900 165,925 220,937 268,937 300,985 340,1040 400,1120 440,1170 490,1260 540,1323 565,1382 620,1460 670,1560 720,1650 770,1695 815,1740 850,1790 890,1820 930,1828 990,1825 1045,1833 1100,1862 1170,1895 1210,1907 1260,1907 1285,1915 1330,1910 1375,1938',
      '25,925 70,930 100,937 130,935 170,967 220,972 270,962 300,1035 330,1085 375,1170 410,1225 450,1275 490,1365 540,1450 570,1527 620,1600 665,1710 710,1795 760,1830 810,1860 840,1905 875,1940 910,1938 950,1915 1000,1888 1045,1888 1080,1905 1110,1915 1145,1925 1175,1945 1270,1945 1310,1933 1335,1933 1355,1955 1375,1972'],
    tags: [[1153, '1,09552', '#0080ff', '#fff'], [1858, '1,08875', '#0ff', '#022'], [1944, '1,08793', '#0ff', '#022'], [1978, '1,08762', '#0ff', '#022'], [2122, '1,08622', '#f00', '#fff']]
  }
};

// Draws one chart into its svg at the size the panel currently has.
function draw(panel) {
  const c = charts[panel.dataset.chart];
  const svg = panel.querySelector('.canvas');
  const { width: W, height: H } = svg.getBoundingClientRect();
  const axis = Math.round(W - 48), base = Math.round(H - 16);
  const kx = axis / 1409, ky = base / 2060;
  const X = v => Math.round((v - 13) * kx) + 0.5;
  const Y = v => Math.round((v - 204) * ky) + 0.5;
  const line = (x1, y1, x2, y2, s, extra = '') => `<line x1="${x1}" y1="${y1}" x2="${x2}" y2="${y2}" stroke="${s}" ${extra}/>`;
  let o = '';
  for (let i = 0; i < c.prices.n; i++) {
    const y = Y(c.prices.y + i * c.prices.dy), p = String(c.prices.top - i * c.prices.by);
    o += line(0, y, axis, y, '#12203c', 'stroke-dasharray="1 2"') + line(axis, y, axis + 4, y, '#0a4468');
    o += `<text x="${axis + 6}" y="${y + 3}" fill="#b4b4b4">${p[0]},${p.slice(1)}</text>`;
  }
  c.grid.forEach(g => { o += line(X(g), 0, X(g), base, '#12203c', 'stroke-dasharray="1 2"') + line(X(g), base, X(g), base + 5, '#0a5c88'); });
  c.days.forEach(g => { o += line(X(g), 0, X(g), base, '#a8a8a8', 'stroke-dasharray="4 2"'); });
  for (let t = 16; t < 1420; t += 30.35) o += line(X(t), base, X(t), base + 3, '#0a4468');
  for (let i = 0; i * 5 < c.candles.length; i++) {
    const [hi, top, bot, lo, down] = c.candles.slice(i * 5, i * 5 + 5);
    const x = X(c.first + i * c.step), half = (c.body - 1) / 2;
    o += line(x, Y(hi), x, Y(top), '#ff8000') + line(x, Y(bot), x, Y(lo), '#ff8000');
    o += `<rect x="${x - half}" y="${Y(top)}" width="${c.body - 1}" height="${Math.max(1, Y(bot) - Y(top))}" stroke="#ff8000" fill="${down ? '#fff' : '#000'}"/>`;
  }
  const poly = (pts, s, w) => `<polyline fill="none" stroke="${s}" stroke-width="${w}" stroke-linejoin="round" points="${pts.split(' ').map(p => { const [a, b] = p.split(','); return (a - 13) * kx + ',' + (b - 204) * ky; }).join(' ')}"/>`;
  c.fast.forEach(f => { o += poly(f, '#0ff', 1); });
  o += poly(c.slow, '#0080ff', 2);
  if (c.level) {
    const y = Y(c.level[0]);
    o += line(0, y, axis, y, '#8a8a8a') + `<text x="2" y="${y - 3}" fill="#808080">${c.level[1]}</text><text x="${axis - 2}" y="${y - 3}" fill="#808080" text-anchor="end">${c.level[2]}</text>`;
  }
  o += line(axis + 0.5, 0, axis + 0.5, base, '#0a4468') + line(0, base + 0.5, axis, base + 0.5, '#0a4468') + line(0.5, 0, 0.5, base, '#0a4468');
  o += `<path d="M${axis - 17} 0h12l-6 7z" fill="#0a5c94"/>`;
  c.tags.forEach(([v, t, bg, fg]) => {
    const y = Y(v);
    o += `<path d="M${axis + 1} ${y}l5-6h39v12h-39z" fill="${bg}"/><text x="${axis + 7}" y="${y + 4}" fill="${fg}">${t}</text>`;
  });
  c.times.forEach(([x, t]) => { o += `<text x="${X(x)}" y="${base + 12}" fill="#b4b4b4">${t}</text>`; });
  svg.innerHTML = o;
}
const drawAll = () => document.querySelectorAll('.chart').forEach(draw);
drawAll();
addEventListener('resize', drawAll);
```
